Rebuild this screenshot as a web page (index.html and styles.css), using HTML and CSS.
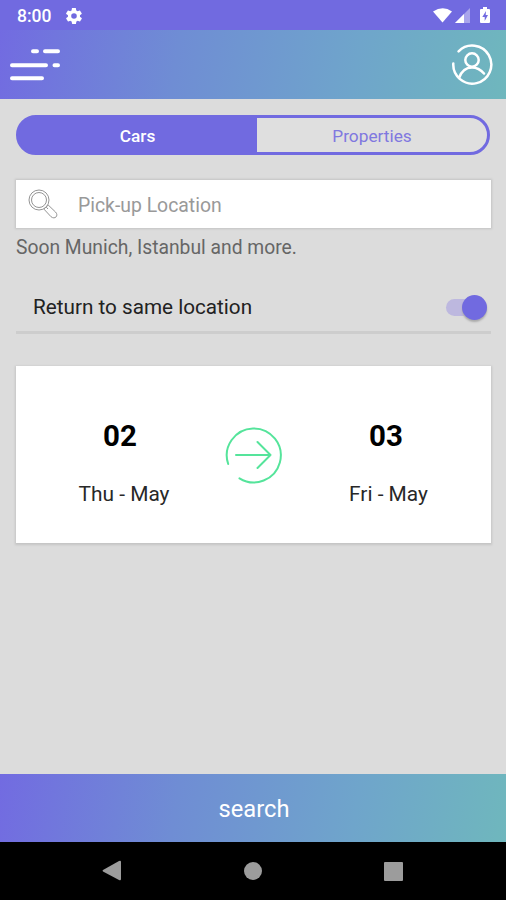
FILE: index.html
```html
<!DOCTYPE html>
<html lang="en">
<head>
<meta charset="utf-8">
<title>Car rental search</title>
<link rel="stylesheet" href="styles.css">
</head>
<body>
<div class="app">
  <div class="status">
    <span class="time">8:00</span>
    <svg class="gear" width="16" height="16" viewBox="2 2 20 20"><path fill="#fff" d="M19.4 13c.1-.3.1-.7.1-1s0-.7-.1-1l2.1-1.600c.2-.2.3-.4.1-.7l-2-3.400c-.1-.2-.4-.3-.6-.2l-2.500 1c-.5-.4-1.100-.7-1.700-1l-.4-2.600c0-.3-.2-.5-.5-.5h-4c-.2 0-.4.2-.5.400l-.4 2.700c-.6.2-1.100.6-1.700 1l-2.500-1c-.2-.1-.5 0-.6.2l-2 3.400c-.1.2-.1.5.1.700L4.500 11c0 .3-.1.700-.1 1s0 .7.100 1l-2.100 1.600c-.2.2-.3.400-.1.700l2 3.400c.1.200.4.300.6.200l2.500-1c.5.400 1.100.7 1.700 1l.4 2.600c0 .300.200.5.500.5h4c.2 0 .5-.2.500-.4l.4-2.700c.6-.2 1.100-.6 1.700-1l2.500 1c.2.100.5 0 .6-.2l2-3.400c.1-.2.1-.5-.1-.7zM12 15.500a3.500 3.500 0 1 1 0-7 3.500 3.500 0 0 1 0 7z"/></svg>
    <svg class="signals" width="60" height="18" viewBox="0 0 60 18">
      <path fill="#fff" d="M1 4.500Q11 -2 20 4.500L10.500 15.500Z"/>
      <path fill="#fff" fill-opacity=".4" d="M38 1V16H23Z"/>
      <path fill="#fff" d="M32 7V16H23Z"/>
      <path fill="#fff" d="M49 2h2V0h4v2h2q1 0 1 1v12q0 1-1 1h-8q-1 0-1-1V3q0-1 1-1z"/>
      <path fill="#716ae0" d="M54 4L50.300 10H52.700V14L56 8H53.700Z"/>
    </svg>
  </div>
  <header class="header">
    <svg width="52" height="34" viewBox="0 0 52 34" fill="none" stroke="#fff" stroke-width="4" stroke-linecap="round"><path d="M24 3.200h4M36 3.200h13M3 17.200h34M45.500 17.200h3.500M3 30.200h30"/></svg>
    <svg width="42" height="42" viewBox="0 0 42 42" fill="none" stroke="#fff" stroke-width="2.500" stroke-linecap="round"><path d="M7.600 7.400A19 19 0 1 1 2.300 19.500"/><circle cx="21" cy="16" r="6.700"/><path d="M8 34C10.500 27 15 23.500 21 23.500S30 26 33 29.500"/></svg>
  </header>
  <main class="content">
    <div class="tabs"><div class="tab active">Cars</div><div class="tab">Properties</div></div>
    <div class="pickup">
      <svg width="30" height="30" viewBox="0 0 30 30" fill="none" stroke="#949494" stroke-width="1"><circle cx="11" cy="11" r="10"/><circle cx="11" cy="11" r="7.500"/><path d="M17.300 19L16 20.200L23 27.700C27 31 31 26.500 27.500 23L20.200 16L19 17.300M17.300 19L19 17.300M18.300 18.200L20 20"/></svg>
      <span>Pick-up Location</span>
    </div>
    <p class="hint">Soon Munich, Istanbul and more.</p>
    <div class="return"><span>Return to same location</span><div class="switch"><div class="thumb"></div></div></div>
    <div class="dates">
      <div class="date from"><b>02</b><span>Thu - May</span></div>
      <svg width="58" height="58" viewBox="0 0 58 58" fill="none" stroke="#55e49b" stroke-width="2" stroke-linecap="round" stroke-linejoin="round"><path d="M4.200 38A27 27 0 1 1 15.500 52.300M12 29H46.500M33.500 16L46.500 29L33.500 42"/></svg>
      <div class="date to"><b>03</b><span>Fri - May</span></div>
    </div>
  </main>
  <div class="search">search</div>
  <nav class="nav">
    <svg width="20" height="22" viewBox="0 0 20 22"><path fill="#9c9c9c" d="M1 10L17 1Q19 0 19 2V19Q19 21 17 20L1 11.500Q0 10.700 1 10Z"/></svg>
    <div class="home"></div>
    <div class="recent"></div>
  </nav>
</div>
</body>
</html>
```

FILE: styles.css
```css
* { box-sizing: border-box; }
body { margin: 0; font-family: Roboto, "Liberation Sans", sans-serif; }
svg { display: block; flex: none; }
.app { width: 506px; height: 900px; display: flex; flex-direction: column; background: #dcdcdc; overflow: hidden; }
.status { height: 30px; flex: none; display: flex; align-items: center; padding: 2px 14px 0 17px; background: #716ae0; color: #fff; }
.time { font-size: 17.500px; font-weight: 500; line-height: 28px; width: 49px; }
.signals { margin-left: auto; }
.header { height: 69px; flex: none; display: flex; align-items: center; justify-content: space-between; padding: 0 13px 0 9px; }
.header, .search { background: linear-gradient(100deg, #726be1 0%, #6f8dd4 35%, #6fa5cb 70%, #6fb7bd 100%); }
.content { flex: 1; padding: 16px 15px 0; }
.tabs { height: 40px; margin: 0 0 0 1px; width: 474px; display: flex; border: 3px solid #716ae0; border-radius: 20px; background: linear-gradient(90deg, #716ae0 200px, #dfdfdf 200px) border-box; font-size: 17.300px; line-height: 36px; text-align: center; color: #8078df; }
.tab { flex: 1; }
.tab.active { flex: 0 0 238px; border-radius: 17px 0 0 17px; background: #716ae0; color: #fff; font-weight: 500; border-right: 1px solid #716ae0; }
.pickup { height: 48px; margin: 25px 0 0 1px; width: 475px; background: #fff; box-shadow: 0 0 2px 1px #c3c3c3; display: flex; align-items: center; gap: 20px; padding-left: 12px; font-size: 19.400px; color: #999; }
.pickup span { padding-top: 3px; }
.hint { margin: 8px 0 0 1px; font-size: 19.300px; line-height: 24px; color: #666; }
.return { height: 53px; margin: 21px 0 0 1px; width: 475px; display: flex; align-items: center; justify-content: space-between; border-bottom: 3px solid #cdcdcd; padding: 2px 4px 0 17px; font-size: 20.700px; color: #222; }
.switch { width: 41px; height: 17px; border-radius: 9px; background: #bdb8df; display: flex; justify-content: flex-end; align-items: center; }
.thumb { width: 25px; height: 25px; flex: none; border-radius: 50%; background: #716ae0; box-shadow: 0 2px 2px #aaa; }
.dates { height: 177px; margin: 32px 0 0 1px; width: 475px; background: #fff; box-shadow: 0 1px 2px 1px #c5c5c5; display: grid; grid-template-columns: 208px 58px 208px; align-items: center; }
.date { display: flex; flex-direction: column; align-items: center; color: #282828; font-size: 20.900px; line-height: 24px; gap: 28px; padding-top: 15px; }
.date b { font-size: 29.500px; line-height: 36px; color: #000; }
.date.from span { padding-left: 8px; }
.date.to span { padding-left: 5px; }
.search { height: 68px; flex: none; padding-left: 2px; color: #fff; font-size: 23.700px; line-height: 70px; text-align: center; }
.nav { height: 58px; flex: none; background: #000; display: flex; justify-content: space-between; align-items: center; padding: 0 103px 0 102px; }
.home { width: 18px; height: 18px; border-radius: 50%; background: #9c9c9c; }
.recent { width: 19px; height: 19px; border-radius: 1px; background: #9c9c9c; }
```
